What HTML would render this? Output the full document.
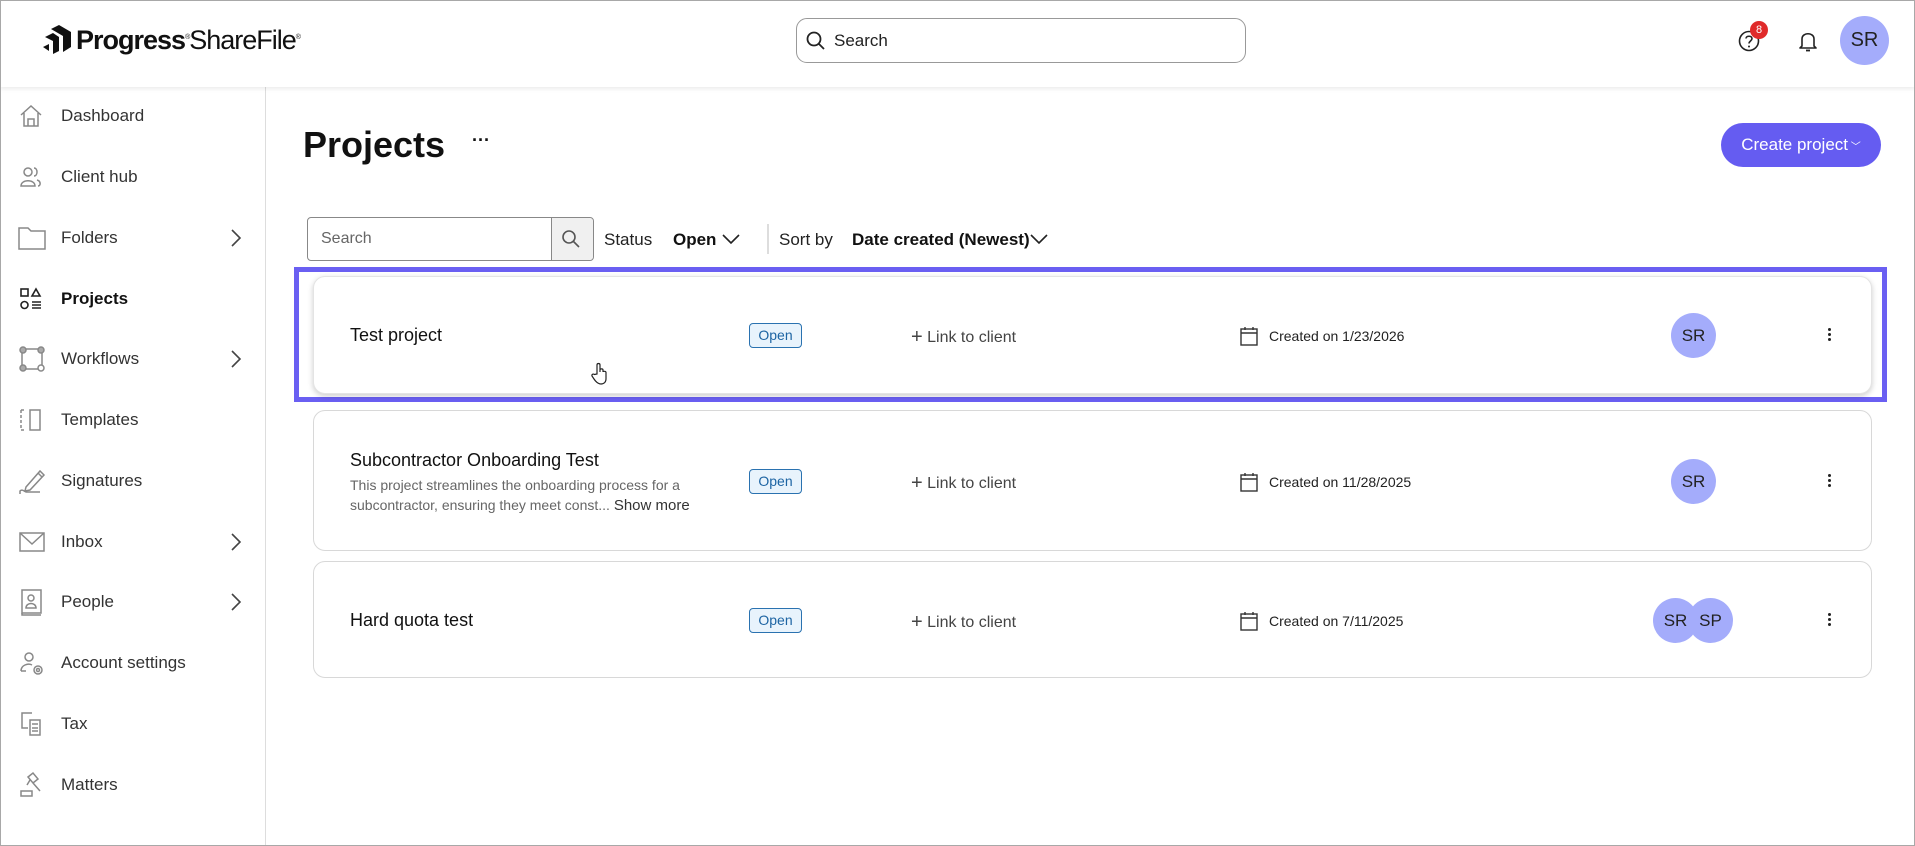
<!DOCTYPE html>
<html><head><meta charset="utf-8"><style>
*{box-sizing:border-box;margin:0;padding:0}
body{width:1915px;height:846px;overflow:hidden;background:#fff;font-family:"Liberation Sans",Arial,sans-serif;color:#111;position:relative}
.frame{position:absolute;left:0;top:0;width:1915px;height:846px;border:1px solid #a8a8a8;pointer-events:none;z-index:50}
.hdr{position:absolute;left:0;top:0;width:1915px;height:87px;background:#fff;box-shadow:0 2px 4px rgba(0,0,0,.08);z-index:5}
.abs{position:absolute}
.side{position:absolute;left:0;top:87px;width:266px;height:759px;border-right:1px solid #ddd}
.nav{position:absolute;left:0;height:40px;width:266px;display:flex;align-items:center;font-size:17px;color:#333}
.nav svg{position:absolute;left:18px}
.nav span{position:absolute;left:61px}
.nav .chev{position:absolute;left:229px}
.card{position:absolute;left:313px;width:1559px;background:#fff;border:1px solid #d8d8d8;border-radius:12px}
.ttl{position:absolute;left:36px;font-size:18px;color:#111}
.badge{position:absolute;left:435px;width:53px;height:25px;border:1px solid #2a72b0;border-radius:4px;background:#e8f3fc;color:#1d64a3;font-size:14px;text-align:center;line-height:23px}
.link{position:absolute;left:597px;font-size:16px;color:#444}
.cr{position:absolute;left:934px;font-size:14px;color:#222}
.av{position:absolute;width:45px;height:45px;border-radius:50%;background:#a4acfb;color:#222;font-size:17px;text-align:center;line-height:45px}
.keb{position:absolute;left:1514px;width:3px}
.keb i{display:block;width:3px;height:3px;background:#222;border-radius:50%;margin-bottom:2px}
</style></head><body>
<div class="frame"></div>
<div class="hdr">
  <svg class="abs" style="left:43px;top:25px" width="30" height="30" viewBox="0 0 30 30"><path d="M8 4 L16 0 L28 7 L28 22 L20 27 L20 11 Z" fill="#111"/><path d="M2 12 L10 8 L16 12 L16 26 L10 29 L10 16 Z" fill="#111"/><path d="M0 22 L6 19 L6 26 Z" fill="#111"/></svg>
  <div class="abs" style="left:76px;top:25px;font-size:27px;letter-spacing:-1px;color:#111"><b style="font-weight:bold">Progress</b><sup style="font-size:7px">®</sup><span>ShareFile</span><sup style="font-size:7px">®</sup></div>
  <div class="abs" style="left:796px;top:18px;width:450px;height:45px;border:1px solid #999;border-radius:11px"></div>
  <svg class="abs" style="left:806px;top:31px" width="20" height="20" viewBox="0 0 20 20"><circle cx="8" cy="8" r="6.5" fill="none" stroke="#222" stroke-width="1.8"/><path d="M13 13 L18 18" stroke="#222" stroke-width="1.8"/></svg>
  <div class="abs" style="left:834px;top:31px;font-size:17px;color:#222">Search</div>
  <svg class="abs" style="left:1737px;top:29px" width="24" height="24" viewBox="0 0 24 24"><circle cx="12" cy="12" r="9.5" fill="none" stroke="#222" stroke-width="1.6"/><path d="M9 9.5 C9 6.5 15 6.5 15 9.5 C15 12 12 12 12 14.5" fill="none" stroke="#222" stroke-width="1.6"/><circle cx="12" cy="17.5" r="1" fill="#222"/></svg>
  <div class="abs" style="left:1750px;top:21px;width:18px;height:18px;border-radius:50%;background:#e02a2a;color:#fff;font-size:11px;text-align:center;line-height:18px">8</div>
  <svg class="abs" style="left:1797px;top:29px" width="22" height="24" viewBox="0 0 22 24"><path d="M5 17 L5 10 C5 3 17 3 17 10 L17 17 L19 19 L3 19 Z" fill="none" stroke="#222" stroke-width="1.6" stroke-linejoin="round"/><path d="M9 21.5 L13 21.5" stroke="#222" stroke-width="1.8"/></svg>
  <div class="av" style="left:1840px;top:16px;width:49px;height:49px;line-height:49px;font-size:20px">SR</div>
</div>

<div class="side">
  <div class="nav" style="top:9px"><svg width="26" height="26" viewBox="0 0 26 26" fill="none" stroke="#888" stroke-width="1.5"><path d="M3 12 L13 3 L23 12 M6 10 L6 23 L20 23 L20 10 M10 23 L10 16 L16 16 L16 23"/></svg><span>Dashboard</span></div>
  <div class="nav" style="top:70px"><svg width="26" height="26" viewBox="0 0 26 26" fill="none" stroke="#888" stroke-width="1.5"><circle cx="10" cy="8" r="4"/><path d="M3 22 C3 15 17 15 17 22 Z M16 4 C20 4 20 12 16 12 M19 16 C23 17 23 22 20 22"/></svg><span>Client hub</span></div>
  <div class="nav" style="top:131px"><svg width="28" height="26" viewBox="0 0 28 26" fill="none" stroke="#888" stroke-width="1.5"><path d="M1 3 L10 3 L13 6 L27 6 L27 24 L1 24 Z"/></svg><span>Folders</span><svg class="chev" width="14" height="20" viewBox="0 0 14 20"><path d="M3 2 L11 10 L3 18" fill="none" stroke="#444" stroke-width="1.6"/></svg></div>
  <div class="nav" style="top:192px;color:#111;font-weight:bold"><svg width="26" height="26" viewBox="0 0 26 26" fill="none" stroke="#222" stroke-width="1.6"><rect x="3" y="3" width="7" height="7"/><path d="M18 3 L22 10 L14 10 Z"/><circle cx="6.5" cy="19" r="3.5"/><path d="M14 16 L23 16 M14 19 L23 19 M14 22 L23 22"/></svg><span>Projects</span></div>
  <div class="nav" style="top:252px"><svg width="28" height="28" viewBox="0 0 28 28" fill="none" stroke="#888" stroke-width="1.5"><rect x="4" y="4" width="20" height="20" rx="3"/><circle cx="5" cy="5" r="3" fill="#aaa"/><circle cx="23" cy="5" r="3" fill="#aaa"/><circle cx="5" cy="23" r="3" fill="#aaa"/><circle cx="23" cy="23" r="3" fill="#fff"/></svg><span>Workflows</span><svg class="chev" width="14" height="20" viewBox="0 0 14 20"><path d="M3 2 L11 10 L3 18" fill="none" stroke="#444" stroke-width="1.6"/></svg></div>
  <div class="nav" style="top:313px"><svg width="26" height="26" viewBox="0 0 26 26" fill="none" stroke="#888" stroke-width="1.5"><path d="M3 3 L8 3 M3 3 L3 23 L8 23" stroke-dasharray="3 2"/><rect x="12" y="3" width="10" height="20"/></svg><span>Templates</span></div>
  <div class="nav" style="top:374px"><svg width="28" height="28" viewBox="0 0 28 28" fill="none" stroke="#888" stroke-width="1.5"><path d="M8 20 L22 4 L26 8 L12 23 L7 24 Z M20 6 L24 10"/><path d="M2 27 L2 24 C4 22 6 24 8 25 L22 25"/></svg><span>Signatures</span></div>
  <div class="nav" style="top:435px"><svg width="28" height="26" viewBox="0 0 28 26" fill="none" stroke="#888" stroke-width="1.5"><rect x="2" y="4" width="24" height="18"/><path d="M2 4 L14 15 L26 4"/></svg><span>Inbox</span><svg class="chev" width="14" height="20" viewBox="0 0 14 20"><path d="M3 2 L11 10 L3 18" fill="none" stroke="#444" stroke-width="1.6"/></svg></div>
  <div class="nav" style="top:495px"><svg width="26" height="28" viewBox="0 0 26 28" fill="none" stroke="#888" stroke-width="1.5"><rect x="4" y="2" width="19" height="23"/><circle cx="13" cy="10" r="3"/><path d="M8 20 C8 14 18 14 18 20 Z M4 25 L4 27 L23 27"/></svg><span>People</span><svg class="chev" width="14" height="20" viewBox="0 0 14 20"><path d="M3 2 L11 10 L3 18" fill="none" stroke="#444" stroke-width="1.6"/></svg></div>
  <div class="nav" style="top:556px"><svg width="28" height="28" viewBox="0 0 28 28" fill="none" stroke="#888" stroke-width="1.5"><circle cx="11" cy="8" r="4"/><path d="M3 22 C3 16 10 14 14 16 M3 22 L8 22"/><circle cx="20" cy="21" r="4"/><circle cx="20" cy="21" r="1.5"/></svg><span>Account settings</span></div>
  <div class="nav" style="top:617px"><svg width="26" height="28" viewBox="0 0 26 28" fill="none" stroke="#888" stroke-width="1.5"><path d="M14 3 L4 3 L4 18 L10 18"/><rect x="12" y="10" width="10" height="15"/><path d="M14 14 L20 14 M14 18 L20 18 M14 21 L20 21"/></svg><span>Tax</span></div>
  <div class="nav" style="top:678px"><svg width="26" height="28" viewBox="0 0 26 28" fill="none" stroke="#888" stroke-width="1.5"><path d="M10 6 L15 2 L20 8 L15 12 Z M15 12 L22 20 M12 9 L9 14"/><rect x="3" y="20" width="11" height="5"/></svg><span>Matters</span></div>
</div>

<div class="abs" style="left:303px;top:124px;font-size:36px;font-weight:bold;color:#111">Projects</div>
<div class="abs" style="left:472px;top:130px;font-size:18px;font-weight:bold">···</div>
<div class="abs" style="left:1721px;top:123px;width:160px;height:44px;border-radius:22px;background:#655cf1;color:#fff;font-size:17px;line-height:44px;text-align:center">Create project<span style="font-size:10px"> ﹀</span></div>

<div class="abs" style="left:307px;top:217px;width:287px;height:44px;border:1px solid #888;border-radius:4px"></div>
<div class="abs" style="left:551px;top:218px;width:42px;height:42px;background:#f0f0f0;border-left:1px solid #888;border-radius:0 4px 4px 0"></div>
<svg class="abs" style="left:561px;top:229px" width="20" height="20" viewBox="0 0 20 20"><circle cx="8" cy="8" r="6" fill="none" stroke="#555" stroke-width="1.6"/><path d="M12.5 12.5 L18 18" stroke="#555" stroke-width="1.6"/></svg>
<div class="abs" style="left:321px;top:230px;font-size:16px;color:#666">Search</div>
<div class="abs" style="left:604px;top:230px;font-size:17px;color:#222">Status</div>
<div class="abs" style="left:673px;top:230px;font-size:17px;font-weight:bold">Open</div>
<svg class="abs" style="left:721px;top:232px" width="20" height="14" viewBox="0 0 20 14"><path d="M2 3 L10 11 L18 3" fill="none" stroke="#222" stroke-width="1.6"/></svg>
<div class="abs" style="left:767px;top:224px;width:2px;height:30px;background:#ddd"></div>
<div class="abs" style="left:779px;top:230px;font-size:17px;color:#222">Sort by</div>
<div class="abs" style="left:852px;top:230px;font-size:17px;font-weight:bold">Date created (Newest)</div>
<svg class="abs" style="left:1029px;top:232px" width="20" height="14" viewBox="0 0 20 14"><path d="M2 3 L10 11 L18 3" fill="none" stroke="#222" stroke-width="1.6"/></svg>

<div class="abs" style="left:294px;top:267px;width:1593px;height:135px;border:5px solid #6a5ff2"></div>

<div class="card" style="top:276px;height:118px;box-shadow:0 2px 6px rgba(0,0,0,.2);border-color:#e4e4e4">
  <div class="ttl" style="top:48px">Test project</div>
  <div class="badge" style="top:46px">Open</div>
  <div class="link" style="top:48px"><span style="font-size:20px;position:relative;top:1px">+</span> Link to client</div>
  <svg class="abs" style="left:926px;top:49px" width="18" height="20" viewBox="0 0 18 20" fill="none" stroke="#333" stroke-width="1.4"><rect x="1" y="3" width="16" height="16"/><path d="M1 7 L17 7 M5 1 L5 4 M13 1 L13 4"/></svg>
  <div class="cr" style="top:51px;left:955px">Created on 1/23/2026</div>
  <div class="av" style="left:1357px;top:36px">SR</div>
  <div class="keb" style="top:51px"><i></i><i></i><i></i></div>
  <svg class="abs" style="left:277px;top:85px" width="18" height="24" viewBox="0 0 18 24" fill="#fff" stroke="#222" stroke-width="1.2"><path d="M6 12 L6 3 C6 1 9 1 9 3 L9 10 L9 8 C9 6.5 12 6.5 12 8 L12 10 C12 9 15 9 15 10.5 L15 17 C15 20 13 22 10 22 C7 22 5 20 3 17 L1 14 C0.5 12.5 2 11.5 3.5 12.5 Z"/></svg>
</div>

<div class="card" style="top:410px;height:141px">
  <div class="ttl" style="top:39px">Subcontractor Onboarding Test</div>
  <div class="abs" style="left:36px;top:64px;font-size:14px;color:#666;line-height:20px">This project streamlines the onboarding process for a<br>subcontractor, ensuring they meet const... <span style="color:#333;font-size:15px">Show more</span></div>
  <div class="badge" style="top:58px">Open</div>
  <div class="link" style="top:60px"><span style="font-size:20px;position:relative;top:1px">+</span> Link to client</div>
  <svg class="abs" style="left:926px;top:61px" width="18" height="20" viewBox="0 0 18 20" fill="none" stroke="#333" stroke-width="1.4"><rect x="1" y="3" width="16" height="16"/><path d="M1 7 L17 7 M5 1 L5 4 M13 1 L13 4"/></svg>
  <div class="cr" style="top:63px;left:955px">Created on 11/28/2025</div>
  <div class="av" style="left:1357px;top:48px">SR</div>
  <div class="keb" style="top:63px"><i></i><i></i><i></i></div>
</div>

<div class="card" style="top:561px;height:117px">
  <div class="ttl" style="top:48px">Hard quota test</div>
  <div class="badge" style="top:46px">Open</div>
  <div class="link" style="top:48px"><span style="font-size:20px;position:relative;top:1px">+</span> Link to client</div>
  <svg class="abs" style="left:926px;top:49px" width="18" height="20" viewBox="0 0 18 20" fill="none" stroke="#333" stroke-width="1.4"><rect x="1" y="3" width="16" height="16"/><path d="M1 7 L17 7 M5 1 L5 4 M13 1 L13 4"/></svg>
  <div class="cr" style="top:51px;left:955px">Created on 7/11/2025</div>
  <div class="av" style="left:1339px;top:36px">SR</div>
  <div class="av" style="left:1374px;top:36px">SP</div>
  <div class="keb" style="top:51px"><i></i><i></i><i></i></div>
</div>
</body></html>
